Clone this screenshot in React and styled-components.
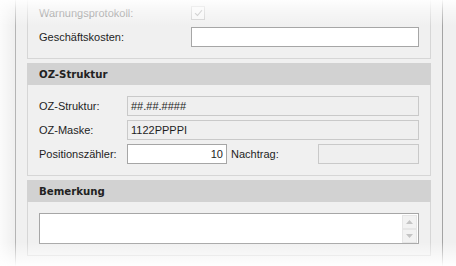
import React from "react";
import styled, { createGlobalStyle } from "styled-components";

const Global = createGlobalStyle`
  html, body { margin: 0; padding: 0; background: #f0f0f0; }
  body { font-family: "Liberation Sans", Arial, sans-serif; font-size: 11px; color: #1e1e1e; }
  * { box-sizing: border-box; }
`;

const Page = styled.div`
  position: relative;
  width: 456px;
  height: 266px;
  overflow: hidden;
  background: #f0f0f0;
  padding-left: 15px;
  padding-right: 13px;
`;

const Frame = styled.div`
  height: 100%;
  border-left: 1px solid #b4b4b4;
  border-right: 1px solid #a4a4a4;
  padding: 0 11px;
  display: flex;
  flex-direction: column;
  gap: 4px;
`;

const Section = styled.div`
  border: 1px solid #d6d6d6;
  border-top: ${(p) => (p.$cut ? "none" : "1px solid #d6d6d6")};
  background: #f0f0f0;
`;

const Header = styled.div`
  margin: -1px -1px 0;
  height: 22px;
  background: #d2d2d2;
  display: flex;
  align-items: center;
  padding-left: 12px;
  font-family: "DejaVu Sans", Verdana, sans-serif;
  font-weight: bold;
  font-size: 10.2px;
  color: #222;
`;

const Body = styled.div`
  padding: ${(p) => p.$pad || "11px 11px 11px 11px"};
  display: flex;
  flex-direction: column;
  gap: 4px;
`;

const Row = styled.div`
  display: flex;
  align-items: center;
  height: 20px;
`;

const Label = styled.div`
  width: ${(p) => p.$w}px;
  margin-left: ${(p) => p.$ml || 0}px;
  flex: none;
  color: ${(p) => (p.$disabled ? "#8e8e8e" : "#1e1e1e")};
  white-space: nowrap;
`;

const Field = styled.div`
  height: 20px;
  flex: ${(p) => (p.$w ? "none" : "1")};
  width: ${(p) => (p.$w ? `${p.$w}px` : "auto")};
  border: 1px solid ${(p) => (p.$edit ? "#a6a6a6" : "#c9c9c9")};
  background: ${(p) => (p.$edit ? "#ffffff" : "#efefef")};
  display: flex;
  align-items: center;
  justify-content: ${(p) => (p.$right ? "flex-end" : "flex-start")};
  padding: 0 3px;
  color: #1e1e1e;
`;

const Check = styled.div`
  width: 14px;
  height: 14px;
  border: 1px solid #cfcfcf;
  background: #f6f6f6;
  display: flex;
  align-items: center;
  justify-content: center;
`;

const Memo = styled.div`
  height: 31px;
  border: 1px solid #a6a6a6;
  background: #fff;
  display: flex;
  justify-content: flex-end;
  padding: 0 1px 0 0;
`;

const Spin = styled.div`
  width: 15px;
  display: flex;
  flex-direction: column;
  gap: 0;
  padding-top: 1px;
`;

const SpinBtn = styled.div`
  height: 14px;
  background: #f2f2f2;
  border: 1px solid #e6e6e6;
  display: flex;
  align-items: center;
  justify-content: center;
`;

const Vignette = styled.div`
  position: absolute;
  inset: 0;
  pointer-events: none;
  background:
    linear-gradient(to bottom, rgba(255,255,255,0.92) 0px, rgba(255,255,255,0.5) 10px, rgba(255,255,255,0) 26px),
    linear-gradient(to top, rgba(255,255,255,0.97) 0px, rgba(255,255,255,0.55) 10px, rgba(255,255,255,0) 24px),
    linear-gradient(to right, rgba(255,255,255,0.75) 0px, rgba(255,255,255,0) 14px);
`;

const Arrow = ({ up }) => (
  <svg width="7" height="4" viewBox="0 0 7 4">
    <path d={up ? "M0 4 L3.5 0 L7 4 Z" : "M0 0 L3.5 4 L7 0 Z"} fill="#c4c4c4" />
  </svg>
);

export default function App() {
  return (
    <>
      <Global />
      <Page>
        <Frame>
          <Section $cut>
            <Body $pad="3px 11px 11px 11px">
              <Row>
                <Label $w={152} $disabled>Warnungsprotokoll:</Label>
                <Check>
                  <svg width="9" height="8" viewBox="0 0 9 8">
                    <path d="M1 4.2 L3.5 6.5 L8 1.2" fill="none" stroke="#b8b8b8" strokeWidth="1.1" />
                  </svg>
                </Check>
              </Row>
              <Row>
                <Label $w={152}>Geschäftskosten:</Label>
                <Field $edit />
              </Row>
            </Body>
          </Section>

          <Section>
            <Header>OZ-Struktur</Header>
            <Body>
              <Row>
                <Label $w={88}>OZ-Struktur:</Label>
                <Field>##.##.####</Field>
              </Row>
              <Row>
                <Label $w={88}>OZ-Maske:</Label>
                <Field>1122PPPPI</Field>
              </Row>
              <Row>
                <Label $w={88}>Positionszähler:</Label>
                <Field $edit $right $w={100}>10</Field>
                <Label $w={87} $ml={4}>Nachtrag:</Label>
                <Field />
              </Row>
            </Body>
          </Section>

          <Section>
            <Header>Bemerkung</Header>
            <Body>
              <Memo>
                <Spin>
                  <SpinBtn><Arrow up /></SpinBtn>
                  <SpinBtn><Arrow /></SpinBtn>
                </Spin>
              </Memo>
            </Body>
          </Section>
        </Frame>
        <Vignette />
      </Page>
    </>
  );
}
